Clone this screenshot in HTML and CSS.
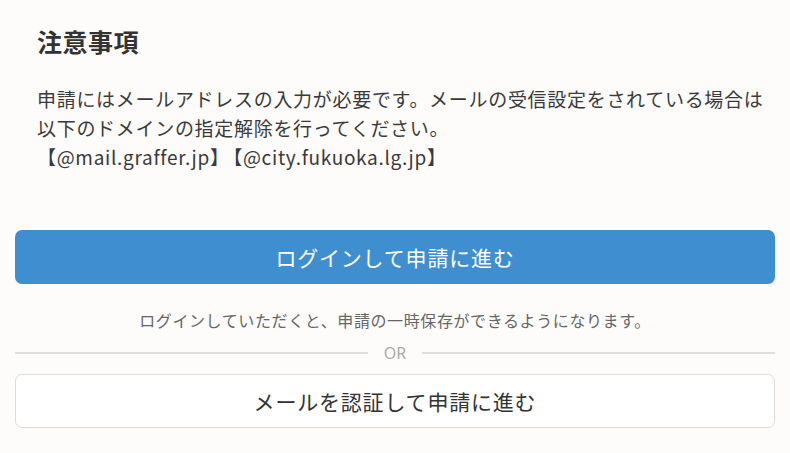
FILE: index.html
```html
<!DOCTYPE html>
<html lang="ja">
<head>
<meta charset="utf-8">
<link rel="stylesheet" href="styles.css">
</head>
<body>
<div class="page">
  <section class="notice">
    <h2 class="notice-title">注意事項</h2>
    <p class="notice-text">申請にはメールアドレスの入力が必要です。メールの受信設定をされている場合は<br>以下のドメインの指定解除を行ってください。<br>【@mail.graffer.jp】<span class="domain">【@city.fukuoka.lg.jp】</span></p>
  </section>
  <div class="actions">
    <button class="btn btn-primary">ログインして申請に進む</button>
    <p class="hint">ログインしていただくと、申請の一時保存ができるようになります。</p>
    <div class="divider"><span class="divider-line"></span><span class="divider-text">OR</span><span class="divider-line"></span></div>
    <button class="btn btn-secondary">メールを認証して申請に進む</button>
  </div>
</div>
</body>
</html>
```
FILE: styles.css
```css
* { box-sizing: border-box; }
html, body {
  margin: 0;
  padding: 0;
  background: #fdfcfb;
}
body {
  font-family: "Noto Sans CJK JP", "Noto Sans", sans-serif;
  color: #333;
}
.page {
  padding: 0 15px;
}
.notice {
  padding: 22px 22px 0;
}
.notice-title {
  margin: 0;
  font-size: 25px;
  font-weight: 700;
  line-height: 38px;
  letter-spacing: 0.02em;
  color: #333;
}
.notice-text {
  margin: 24px 0 0;
  font-size: 19px;
  line-height: 29px;
  letter-spacing: 0.7px;
  color: #3a3a3a;
  white-space: nowrap;
}
.domain {
  margin-left: 3px;
}
.actions {
  margin-top: 59px;
  display: flex;
  flex-direction: column;
}
.btn {
  width: 100%;
  height: 54px;
  border-radius: 7px;
  font-family: inherit;
  font-size: 21px;
  letter-spacing: 0.8px;
  cursor: pointer;
}
.btn-primary {
  background: #3f8ecf;
  border: none;
  color: #fff;
}
.btn-secondary {
  background: #fff;
  border: 1px solid #dcdcdc;
  color: #333;
}
.hint {
  margin: 24px 0 0;
  text-align: center;
  font-size: 16px;
  line-height: 24px;
  letter-spacing: 0.6px;
  color: #666;
}
.divider {
  display: flex;
  align-items: center;
  gap: 16px;
  margin: 9px 0 9px;
  height: 24px;
}
.divider-line {
  flex: 1;
  height: 2px;
  background: #dedede;
}
.divider-text {
  font-family: "Noto Sans", sans-serif;
  font-size: 16px;
  color: #aaa;
}
```
